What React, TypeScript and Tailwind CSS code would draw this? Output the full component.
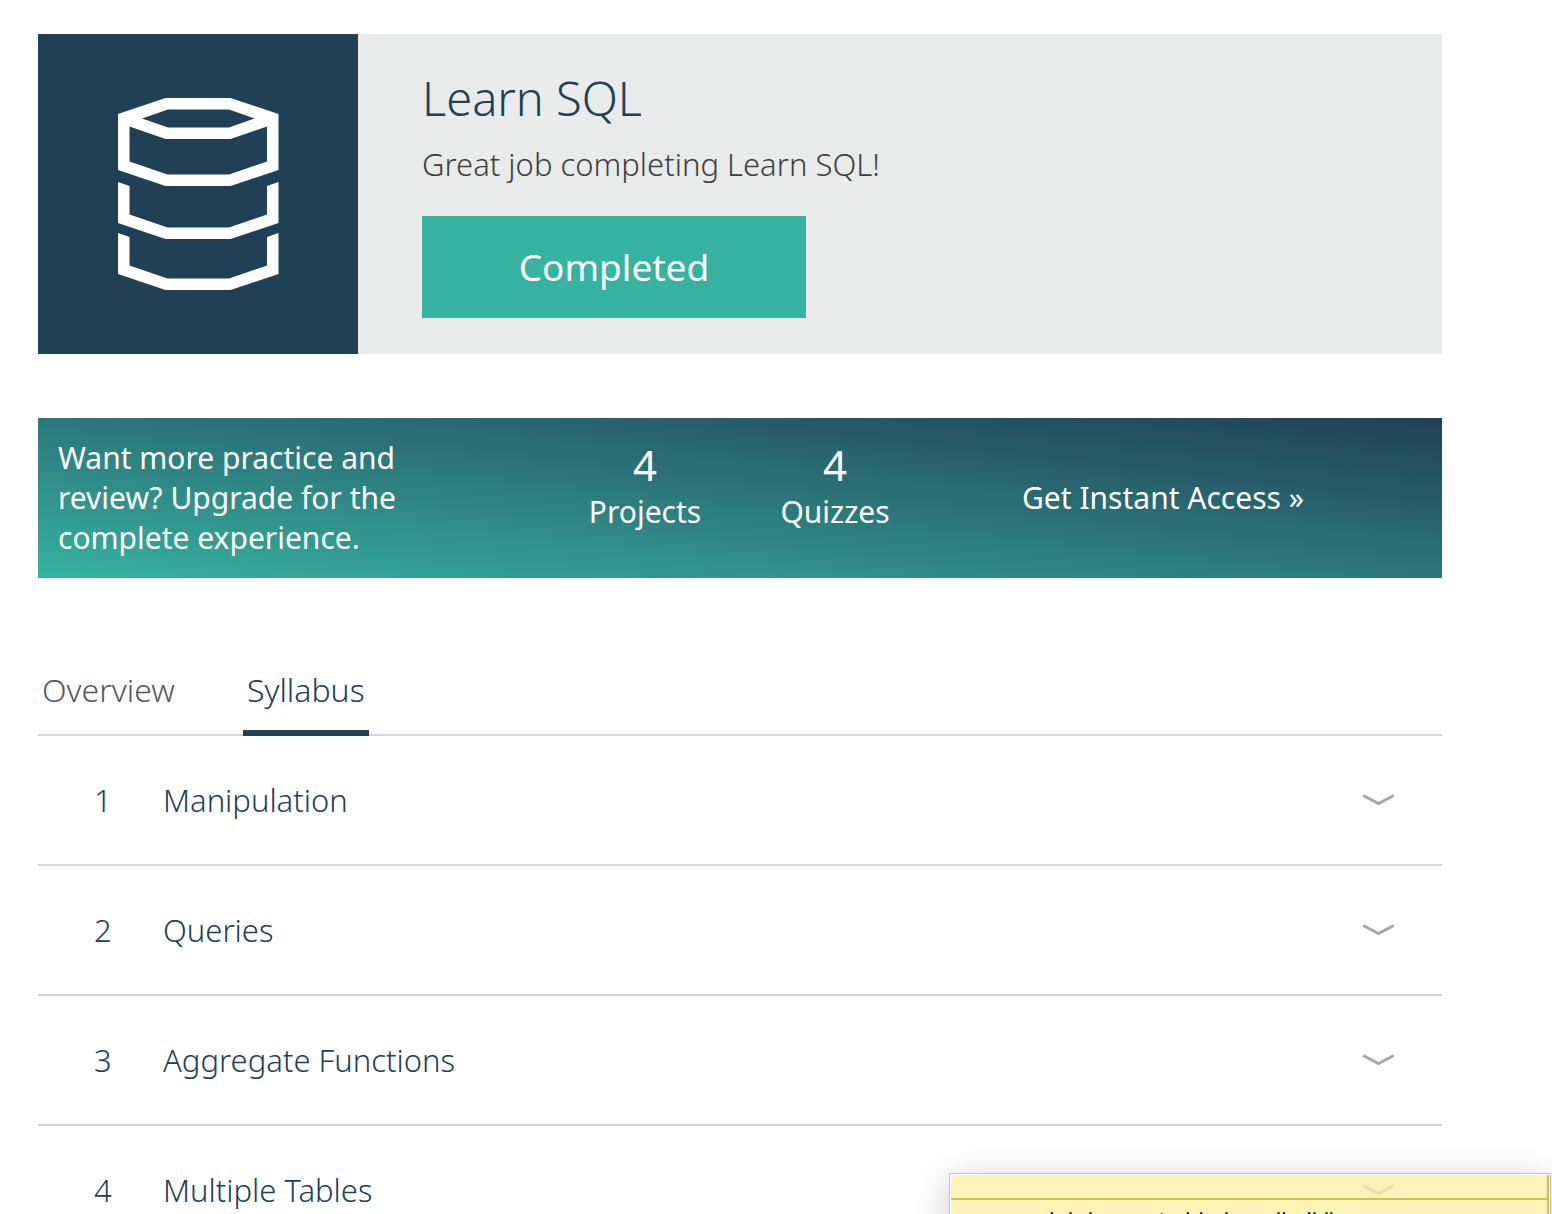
import React, { useState } from "react";

const stats = [
  { count: 4, label: "Projects" },
  { count: 4, label: "Quizzes" },
];

const units = ["Manipulation", "Queries", "Aggregate Functions", "Multiple Tables"];

const tabs = ["Overview", "Syllabus"];

function DatabaseIcon() {
  return (
    <svg className="h-48 w-40 overflow-visible" viewBox="0 0 160 192" fill="#ffffff" aria-hidden="true">
      <path
        fillRule="evenodd"
        d="M0 16L47.500 0H112.500L160.500 16V72L112.500 88H47.500L0 72ZM24 20.500L50 29.500H111L136.500 20.500L111 11.500H50ZM11.500 28.500V63.500L49.500 76.500H111L149 63.500V28.500L112.500 41H47.500Z"
      />
      <path d="M0 84L11.500 88V116.500L49.500 129.500H111L149 116.500V88L160.500 84V125L112.500 141H47.500L0 125Z" />
      <path d="M0 135L11.500 139V167.500L49.500 180.500H111L149 167.500V139L160.500 135V176L112.500 192H47.500L0 176Z" />
    </svg>
  );
}

function Chevron() {
  return (
    <svg className="h-3 w-8" viewBox="0 0 32 12" fill="none" stroke="#a5a6a8" strokeWidth="3" aria-hidden="true">
      <path d="M1.200 1.500L16.500 9.500L31.800 1.500" />
    </svg>
  );
}

function CourseHeader() {
  return (
    <header className="flex bg-[#e8ebea]">
      <div className="flex size-80 shrink-0 items-center justify-center bg-[#204056]">
        <DatabaseIcon />
      </div>
      <div className="flex flex-col items-start pt-8 pl-16">
        <h1 className="text-[47px] leading-[64px] text-[#204056]">Learn SQL</h1>
        <p className="mt-3 text-[31px] leading-[44px] text-[#3e3e40]">Great job completing Learn SQL!</p>
        <button
          type="button"
          className="mt-[30px] h-[102px] w-96 bg-[#35b3a0] text-[37px] font-normal text-white"
        >
          Completed
        </button>
      </div>
    </header>
  );
}

function UpgradeBanner() {
  return (
    <section className="mt-16 grid grid-cols-3 items-center bg-linear-to-tr from-[#35b3a0] to-[#204056] py-5 text-[30px] leading-10 font-normal text-white">
      <p className="pl-5">
        Want more practice and
        <br />
        review? Upgrade for the
        <br />
        complete experience.
      </p>
      <div className="flex justify-center pb-[26px]">
        {stats.map((stat) => (
          <div key={stat.label} className="flex w-[190px] flex-col items-center">
            <span className="text-[42px] leading-[54px]">{stat.count}</span>
            <span>{stat.label}</span>
          </div>
        ))}
      </div>
      <div className="pl-12">
        <a href="#upgrade">Get Instant Access »</a>
      </div>
    </section>
  );
}

function StickyNote() {
  return (
    <aside className="absolute top-[1173px] right-px h-80 w-[602px] border border-[#c3c3bd] shadow-[0_8px_32px_rgba(0,0,0,0.22)]">
      <div className="h-full border border-white bg-[#fcf0a3]/78 bg-clip-padding">
        <div className="h-full border-r-2 border-[#cebf5c] font-['Liberation_Sans',sans-serif] text-[24px] leading-7 font-normal text-[#333333]">
          <div className="h-[25px] border-b-2 border-[#cebf5c]" />
          <p className="pt-[7px] pl-[98px] whitespace-nowrap">lab keeps to big lo null all l)</p>
        </div>
      </div>
    </aside>
  );
}

export default function App() {
  const [active, setActive] = useState("Syllabus");
  return (
    <div className="relative h-screen overflow-hidden bg-white font-['Noto_Sans',sans-serif] font-[350]">
      <main className="pt-[34px] pr-[110px] pl-[38px]">
        <CourseHeader />
        <UpgradeBanner />
        <nav className="mt-20 flex gap-16 border-b-2 border-[#d3d4d5]" role="tablist">
          {tabs.map((tab) => (
            <button
              key={tab}
              type="button"
              role="tab"
              aria-selected={active === tab}
              onClick={() => setActive(tab)}
              className={
                active === tab
                  ? "-mb-0.5 h-[78px] border-b-6 border-[#204056] px-1 pb-2 text-[32px] leading-10 text-[#204056]"
                  : "-mb-0.5 h-[78px] border-b-6 border-transparent px-1 pb-2 text-[32px] leading-10 text-[#58585b]"
              }
            >
              {tab}
            </button>
          ))}
        </nav>
        <ol>
          {units.map((unit, i) => (
            <li key={unit} className="border-b-2 border-[#d3d4d5]">
              <button
                type="button"
                className="flex h-32 w-full items-center pr-12 pl-14 text-left text-[31px] text-[#204056]"
              >
                <span className="w-[69px]">{i + 1}</span>
                <span className="flex-1">{unit}</span>
                <Chevron />
              </button>
            </li>
          ))}
        </ol>
      </main>
      <StickyNote />
    </div>
  );
}
